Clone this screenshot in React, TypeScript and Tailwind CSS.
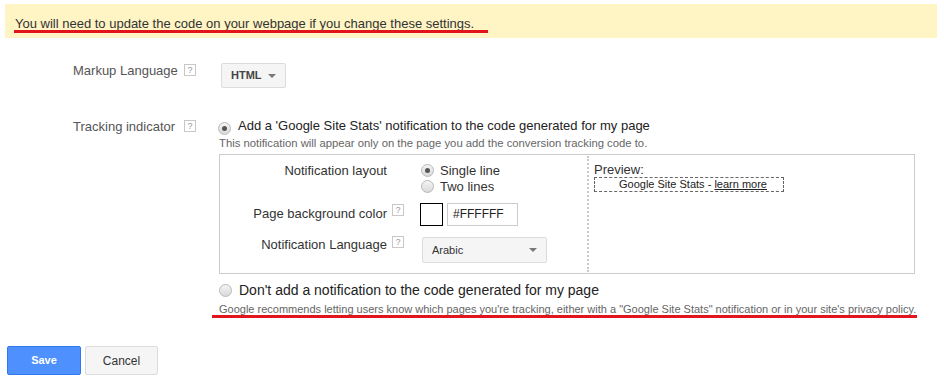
import React from "react";

const Help = ({ className = "" }: { className?: string }) => (
  <span
    className={`inline-flex items-center justify-center w-[12px] h-[12px] border border-[#c8c8c8] text-[9px] leading-none text-[#999] bg-white ${className}`}
  >
    ?
  </span>
);

const Radio = ({ checked = false }: { checked?: boolean }) => (
  <span className="relative inline-flex items-center justify-center w-[13px] h-[13px] rounded-full border border-[#b8b8b8] bg-gradient-to-b from-[#f4f4f4] to-[#d9d9d9] shrink-0">
    {checked && <span className="w-[5px] h-[5px] rounded-full bg-[#555]" />}
  </span>
);

const Arrow = () => (
  <span className="w-0 h-0 border-l-[4px] border-r-[4px] border-t-[4px] border-l-transparent border-r-transparent border-t-[#777]" />
);

export default function App() {
  return (
    <div
      className="relative w-[944px] h-[387px] bg-white text-[#333] overflow-hidden"
      style={{ fontFamily: '"Liberation Sans", Arial, sans-serif' }}
    >
      {/* Banner */}
      <div className="ml-[5px] mt-[4px] w-[932px] h-[34px] bg-[#fff4c4] pl-[10px] pt-[12px] text-[13px] leading-[15px] text-[#333]">
        You will need to update the code on your webpage if you change these settings.
      </div>

      {/* Markup Language */}
      <div className="flex items-start mt-[24px] h-[29px]">
        <div className="pl-[73px] w-[184px] text-[13px] text-[#555] leading-[15px] pt-[1px]">Markup Language</div>
        <Help className="mt-[2px]" />
        <div className="ml-[25px] mt-[1px] flex items-center justify-between w-[65px] h-[25px] px-[9px] bg-[#f5f5f5] border border-[#dcdcdc] rounded-[2px] text-[11px] font-bold text-[#444]">
          <span>HTML</span>
          <Arrow />
        </div>
      </div>

      {/* Tracking indicator */}
      <div className="flex items-start mt-[27px]">
        <div className="pl-[73px] w-[184px] text-[13px] text-[#555] leading-[15px] pt-[1px]">Tracking indicator</div>
        <Help className="mt-[2px]" />
        <div className="ml-[23px] flex flex-col">
          <div className="flex items-center h-[16px]">
            <span className="ml-[-1px]">
              <Radio checked />
            </span>
            <span className="ml-[7px] text-[13px] text-[#222]">
              Add a 'Google Site Stats' notification to the code generated for my page
            </span>
          </div>
          <div className="mt-[3px] text-[11.3px] text-[#666] leading-[13px]">
            This notification will appear only on the page you add the conversion tracking code to.
          </div>

          {/* Settings box */}
          <div className="mt-[4px] flex w-[696px] h-[120px] border border-[#ccc]">
            <div className="w-[367px] flex flex-col text-[13px] text-[#333]">
              <div className="flex mt-[8px]">
                <div className="w-[167px] text-right leading-[15px]">Notification layout</div>
                <div className="ml-[34px] flex flex-col gap-[1px]">
                  <div className="flex items-center h-[15px]">
                    <Radio checked />
                    <span className="ml-[6px] text-[13px]">Single line</span>
                  </div>
                  <div className="flex items-center h-[15px]">
                    <Radio />
                    <span className="ml-[6px] text-[13px]">Two lines</span>
                  </div>
                </div>
              </div>
              <div className="flex items-start mt-[9px]">
                <div className="w-[167px] text-right leading-[15px] mt-[3px]">Page background color</div>
                <Help className="ml-[5px] mt-[1px]" />
                <div className="ml-[16px] w-[23px] h-[23px] border border-black bg-white" />
                <div className="ml-[4px] w-[71px] h-[23px] border border-[#ccc] pl-[5px] leading-[21px] text-[12px] text-[#222]">
                  #FFFFFF
                </div>
              </div>
              <div className="flex items-start mt-[11px]">
                <div className="w-[167px] text-right leading-[15px] mt-[0px]">Notification Language</div>
                <Help className="ml-[5px] mt-[-1px]" />
                <div className="ml-[18px] mt-[0px] flex items-center justify-between w-[125px] h-[26px] pl-[9px] pr-[9px] bg-[#f5f5f5] border border-[#dcdcdc] rounded-[2px] text-[11px] text-[#333]">
                  <span>Arabic</span>
                  <Arrow />
                </div>
              </div>
            </div>
            <div className="my-[1px] border-l-2 border-dotted border-[#c8c8c8]" />
            <div className="pl-[5px] pt-[8px] flex flex-col">
              <div className="text-[13px] leading-[14px] text-[#333]">Preview:</div>
              <div className="w-[190px] h-[15px] border border-dashed border-[#666] text-[11px] leading-[13px] text-[#222] pl-[24px]">
                Google Site Stats - <span className="underline">learn more</span>
              </div>
            </div>
          </div>

          <div className="flex items-center h-[16px] mt-[8px]">
            <Radio />
            <span className="ml-[7px] text-[14px] text-[#222]">Don't add a notification to the code generated for my page</span>
          </div>
          <div className="mt-[5px] text-[11px] text-[#666] leading-[13px]">
            Google recommends letting users know which pages you're tracking, either with a "Google Site Stats" notification or in your site's privacy policy.
          </div>
        </div>
      </div>

      {/* Buttons */}
      <div className="flex gap-[4px] ml-[7px] mt-[30px]">
        <button className="w-[74px] h-[29px] rounded-[2px] bg-[#4d90fe] border border-[#3079ed] text-white text-[11px] font-bold">
          Save
        </button>
        <button className="w-[73px] h-[29px] rounded-[2px] bg-[#f5f5f5] border border-[#dcdcdc] text-[#333] text-[12px]">
          Cancel
        </button>
      </div>

      {/* Red annotation underlines */}
      <div className="absolute left-[14px] top-[30px] w-[474px] h-[3px] bg-[#e2141c]" />
      <div className="absolute left-[212px] top-[315px] w-[705px] h-[3px] bg-[#e2141c]" />
    </div>
  );
}
